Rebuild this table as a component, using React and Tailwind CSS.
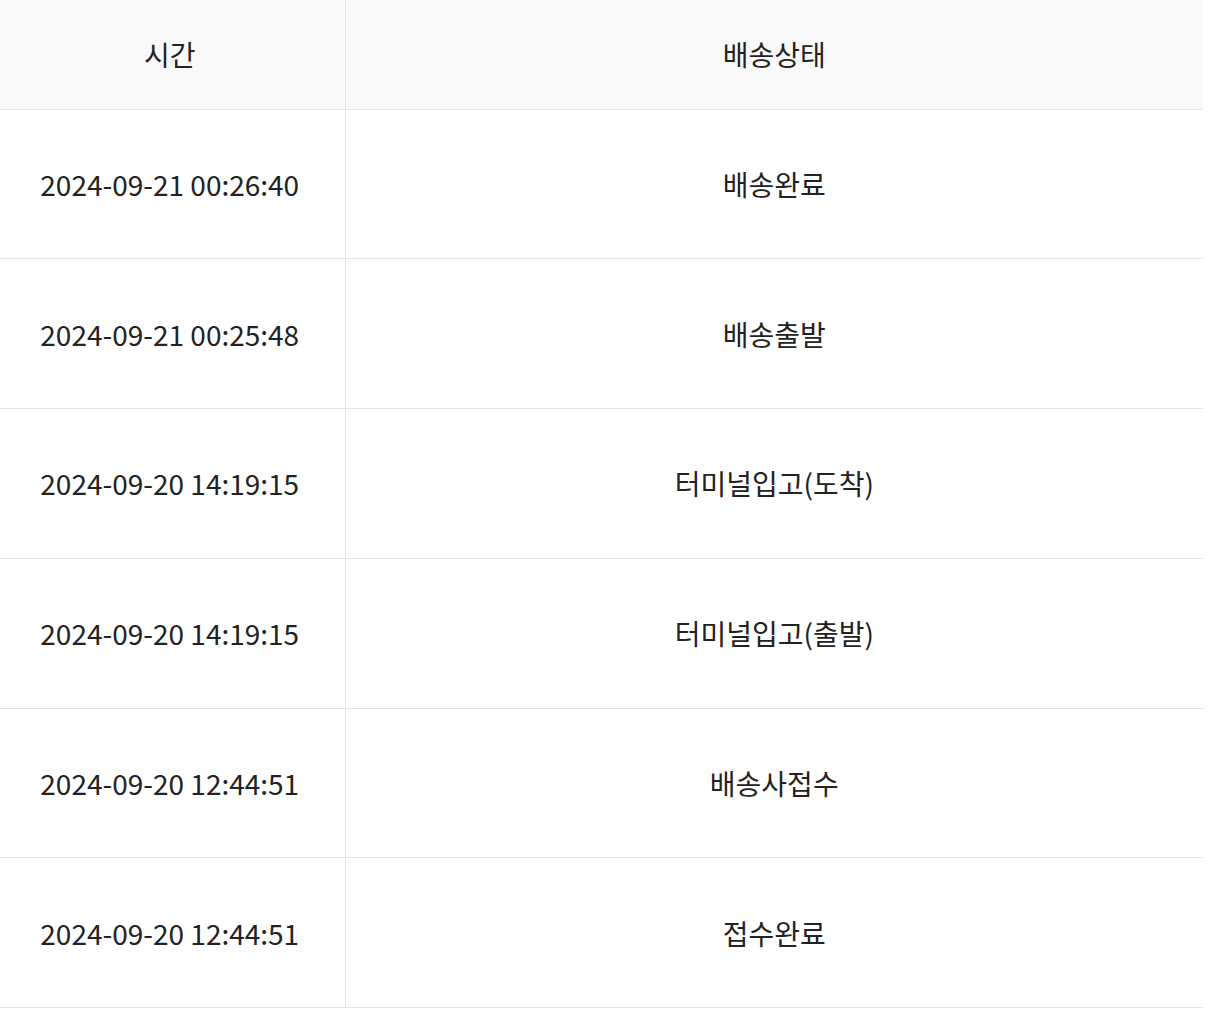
const rows = [
  ["2024-09-21 00:26:40", "배송완료"],
  ["2024-09-21 00:25:48", "배송출발"],
  ["2024-09-20 14:19:15", "터미널입고(도착)"],
  ["2024-09-20 14:19:15", "터미널입고(출발)"],
  ["2024-09-20 12:44:51", "배송사접수"],
  ["2024-09-20 12:44:51", "접수완료"],
];

export default function App() {
  return (
    <div className="w-[1230px] bg-white font-['Noto_Sans_CJK_KR','Noto_Sans',sans-serif] text-[#222]">
      <table className="w-[1203px] border-collapse table-fixed text-[28px]">
        <colgroup>
          <col className="w-[345px]" />
          <col />
        </colgroup>
        <thead>
          <tr className="h-[109px] bg-[#f9f9f9] border-b border-[#e5e5e5]">
            <th className="font-normal text-center pr-[5px] border-r border-[#e5e5e5]">시간</th>
            <th className="font-normal text-center">배송상태</th>
          </tr>
        </thead>
        <tbody>
          {rows.map(([time, status], i) => (
            <tr key={i} className="h-[149.8px] border-b border-[#e5e5e5]">
              <td className="text-center pr-[5px] border-r border-[#e5e5e5]">{time}</td>
              <td className="text-center">{status}</td>
            </tr>
          ))}
        </tbody>
      </table>
    </div>
  );
}
